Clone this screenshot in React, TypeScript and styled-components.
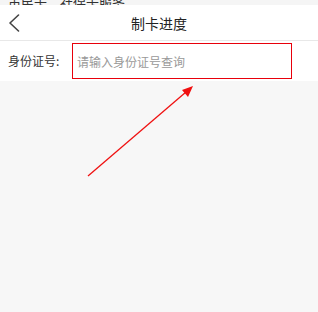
import React from "react";
import styled, { createGlobalStyle } from "styled-components";

const Global = createGlobalStyle`
  html, body { margin: 0; padding: 0; background: #f7f7f7; }
  body { font-family: "Noto Sans CJK SC", "Liberation Sans", sans-serif; }
  * { box-sizing: border-box; }
`;

const Page = styled.div`
  position: relative;
  width: 318px;
  height: 312px;
  background: #f7f7f7;
  overflow: hidden;
`;

const TopStrip = styled.div`
  height: 5px;
  overflow: hidden;
  background: #f5f5f5;
  display: flex;
  align-items: flex-end;
  padding-left: 8px;
`;

const TopText = styled.span`
  font-size: 13px;
  line-height: 13px;
  color: #333;
  white-space: nowrap;
  margin-bottom: -4px;
`;

const Header = styled.div`
  height: 36px;
  background: #fff;
  display: flex;
  align-items: center;
  justify-content: center;
  position: relative;
  border-bottom: 1px solid #e8e8e8;
`;

const Back = styled.button`
  position: absolute;
  left: 6px;
  top: 8px;
  width: 16px;
  height: 20px;
  padding: 0;
  border: none;
  background: none;
  display: flex;
  align-items: center;
  justify-content: center;
`;

const Title = styled.div`
  font-size: 14px;
  color: #222;
  margin-top: 1px;
`;

const Row = styled.div`
  height: 40px;
  background: #fff;
  display: flex;
  align-items: center;
  padding: 2px 26px 2px 8px;
`;

const Label = styled.label`
  font-size: 12px;
  color: #333;
  width: 64px;
  flex: none;
  margin-top: -1px;
`;

const Input = styled.input`
  flex: 1;
  height: 36px;
  border: 1.5px solid #e8000b;
  outline: none;
  padding: 0 0 0 4px;
  font-family: "Noto Sans CJK SC", "Liberation Sans", sans-serif;
  font-size: 12px;
  color: #333;
  background: #fff;
  &::placeholder { color: #999; }
`;

const Overlay = styled.svg`
  position: absolute;
  left: 0;
  top: 0;
  pointer-events: none;
`;

export default function App() {
  return (
    <>
      <Global />
      <Page>
        <TopStrip>
          <TopText>市民卡、社保卡服务</TopText>
        </TopStrip>
        <Header>
          <Back aria-label="返回">
            <svg width="12" height="18" viewBox="0 0 12 18">
              <path d="M10.5 1 L2 9 L10.5 17" fill="none" stroke="#444" strokeWidth="1.6" strokeLinecap="round" strokeLinejoin="round" />
            </svg>
          </Back>
          <Title>制卡进度</Title>
        </Header>
        <Row>
          <Label>身份证号:</Label>
          <Input placeholder="请输入身份证号查询" />
        </Row>
        <Overlay width="318" height="312" viewBox="0 0 318 312">
          <line x1="88" y1="176" x2="186" y2="92" stroke="#f01010" strokeWidth="1.3" />
          <polygon points="193,86 182,90 188,97" fill="#f01010" />
        </Overlay>
      </Page>
    </>
  );
}
